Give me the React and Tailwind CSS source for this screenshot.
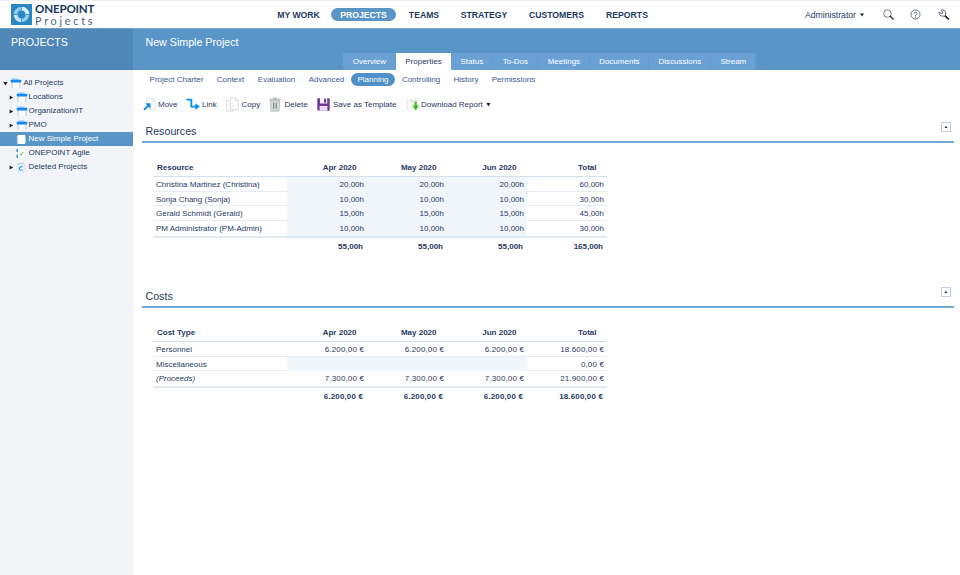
import React, { useState } from "react";

const navItems = [
  { title: "MY WORK", width: "w-[65px]" },
  { title: "PROJECTS", width: "w-[65px]" },
  { title: "TEAMS", width: "w-[56px]" },
  { title: "STRATEGY", width: "w-[64px]" },
  { title: "CUSTOMERS", width: "w-[81px]" },
  { title: "REPORTS", width: "w-[60px]" },
];

const tabs = [
  { title: "Overview", width: "w-[53px]" },
  { title: "Properties", width: "w-[55px]" },
  { title: "Status", width: "w-[42px]" },
  { title: "To-Dos", width: "w-[45px]" },
  { title: "Meetings", width: "w-[52px]" },
  { title: "Documents", width: "w-[59px]" },
  { title: "Discussions", width: "w-[62px]" },
  { title: "Stream", width: "w-[45px]" },
];

const subTabs = [
  { title: "Project Charter", width: "w-[67px]" },
  { title: "Context", width: "w-[41px]" },
  { title: "Evaluation", width: "w-[51px]" },
  { title: "Advanced", width: "w-[49px]" },
  { title: "Planning", width: "w-[44px]" },
  { title: "Controlling", width: "w-[52px]" },
  { title: "History", width: "w-[38px]" },
  { title: "Permissions", width: "w-[57px]" },
];

const resources = {
  title: "Resource",
  rows: [
    { name: "Christina Martinez (Christina)", values: ["20,00h", "20,00h", "20,00h"], total: "60,00h", shaded: true },
    { name: "Sonja Chang (Sonja)", values: ["10,00h", "10,00h", "10,00h"], total: "30,00h", shaded: true },
    { name: "Gerald Schmidt (Gerald)", values: ["15,00h", "15,00h", "15,00h"], total: "45,00h", shaded: true },
    { name: "PM Administrator (PM-Admin)", values: ["10,00h", "10,00h", "10,00h"], total: "30,00h", shaded: true },
  ],
  totals: ["55,00h", "55,00h", "55,00h", "165,00h"],
};

const costs = {
  title: "Cost Type",
  rows: [
    { name: "Personnel", values: ["6.200,00 €", "6.200,00 €", "6.200,00 €"], total: "18.600,00 €" },
    { name: "Miscellaneous", values: ["", "", ""], total: "0,00 €", shaded: true },
    { name: "(Proceeds)", values: ["7.300,00 €", "7.300,00 €", "7.300,00 €"], total: "21.900,00 €", italic: true },
  ],
  totals: ["6.200,00 €", "6.200,00 €", "6.200,00 €", "18.600,00 €"],
};

const Logo = () => (
  <div className="flex items-start">
    <svg className="w-[21px] h-[21px]" viewBox="0 0 21 21">
      <rect width="21" height="21" fill="#2b87c3" />
      <circle cx="10.5" cy="10.5" r="6" fill="none" stroke="#8fcdf0" strokeWidth="3.6" />
      <path d="M10.5 4.5a6 6 0 0 1 6 6" fill="none" stroke="#d9effa" strokeWidth="3.6" />
      <path d="M10.5 16.5a6 6 0 0 1-6-6" fill="none" stroke="#c3e4f6" strokeWidth="3.6" />
      <path d="M10.5 1.5v4.7M10.5 14.8v4.7M1.5 10.5h4.7M14.8 10.5h4.7" stroke="#2b87c3" strokeWidth="0.8" />
    </svg>
    <div className="ml-[3px] -mt-px flex flex-col font-[Lato,sans-serif] whitespace-nowrap">
      <span className="h-[11.5px] leading-[12px] text-[11.6px] font-bold tracking-[-0.18px] text-[#17375e]">
        ONEPOINT
      </span>
      <span className="h-[11.5px] leading-[11.5px] text-[10.8px] tracking-[2.75px] text-[#4a6585]">
        Projects
      </span>
    </div>
  </div>
);

const SearchIcon = () => (
  <svg className="w-[11px] h-[11px]" viewBox="0 0 12 12" fill="none">
    <circle cx="4.9" cy="4.9" r="4.1" stroke="#49546a" strokeWidth="0.8" />
    <path d="M7.9 7.9l3 3" stroke="#1d2a44" strokeWidth="1.4" strokeLinecap="round" />
  </svg>
);

const HelpIcon = () => (
  <svg className="w-[11px] h-[11px]" viewBox="0 0 11 11" fill="none">
    <circle cx="5.5" cy="5.5" r="4.6" stroke="#49546a" strokeWidth="0.8" />
    <path d="M4 4.5a1.5 1.4 0 1 1 2.3 1.2c-.6.4-.8.6-.8 1.2" stroke="#3b475e" strokeWidth="0.9" />
    <circle cx="5.5" cy="8.1" r="0.55" fill="#3b475e" />
  </svg>
);

const WrenchIcon = () => (
  <svg className="w-[12px] h-[12px]" viewBox="0 0 12 12" fill="none">
    <path
      d="M2.8 1.3A3.1 3.1 0 0 1 7.4 5L8 5.8 6.1 7.6 5.2 7A3.2 3.2 0 0 1 1.2 3l2 1.7 1.3-.3.2-1.3z"
      stroke="#3b475e"
      strokeWidth="0.8"
      strokeLinejoin="round"
    />
    <path d="M7.4 7.2l2.9 2.8" stroke="#101a2e" strokeWidth="1.7" strokeLinecap="round" />
  </svg>
);

const FolderIcon = () => (
  <svg className="w-[12px] h-[10px]" viewBox="0 0 12 10">
    <path d="M2 4.2h8V10H2z" fill="#fbfbfc" />
    <path d="M2.1 4.2V10M9.9 4.2V10" stroke="#8fb8e2" strokeWidth="0.7" />
    <path d="M1.6 .6h5.8l.7.6h2.3v1H1.6z" fill="#7cc2ff" />
    <path d="M.5 1.9h11l-.5 2.5H1z" fill="#1688ef" />
  </svg>
);

const ProjectIcon = () => (
  <svg className="w-[10px] h-[11px]" viewBox="0 0 10 11">
    <rect x="1.5" y="1" width="7.9" height="9" rx="1" fill="#fff" />
    <path d="M1.1 2v7" stroke="#c5def5" strokeWidth="0.8" strokeDasharray="1 1" />
  </svg>
);

const AgileIcon = () => (
  <svg className="w-[10px] h-[11px]" viewBox="0 0 10 11">
    <rect x="1.5" y="1" width="7.8" height="9" fill="#fff" stroke="#dde1e6" strokeWidth="0.5" />
    <path d="M1.2 1v3M1.2 6.8V10" stroke="#168af0" strokeWidth="1.3" />
    <path d="M3.6 5.8l1.3 1.5 2.5-3.4" stroke="#55c02c" strokeWidth="1" fill="none" />
  </svg>
);

const BinIcon = () => (
  <svg className="w-[10px] h-[11px]" viewBox="0 0 10 11">
    <path d="M1.8 2.2h6.6l-.6 8.1H2.5z" fill="#eef6fd" stroke="#b9d4ec" strokeWidth="0.6" />
    <path d="M1.3 2l6.9-1.2" stroke="#a5c8e8" strokeWidth="0.8" />
    <path d="M6.4 5.1a1.8 1.8 0 1 0 .2 2.5" stroke="#3c9df0" strokeWidth="1.1" fill="none" />
  </svg>
);

const MoveIcon = () => (
  <svg className="w-[13px] h-[14px]" viewBox="0 0 13 14">
    <path d="M3.5.8h5.8l2.7 2.9v9.2H3.5z" fill="#fafafa" stroke="#d5d7da" strokeWidth="0.6" />
    <path d="M9.3.8v2.9H12" fill="none" stroke="#d5d7da" strokeWidth="0.6" />
    <path d="M1 12.8l4.3-4.2" stroke="#0a8ae6" strokeWidth="1.8" />
    <path d="M2.2 6.2h5.3v5.5z" fill="#0a8ae6" />
  </svg>
);

const LinkIcon = () => (
  <svg className="w-[14px] h-[12px]" viewBox="0 0 14 12">
    <path d="M.3 1.6h5v7h5" fill="none" stroke="#0c8ff0" strokeWidth="1.9" />
    <path d="M9.4 5.2l4.4 3.4-4.4 3.4z" fill="#0c8ff0" />
  </svg>
);

const CopyIcon = () => (
  <svg className="w-[13px] h-[15px]" viewBox="0 0 13 15" fill="#fafafa" stroke="#d0d0d3" strokeWidth="0.6">
    <path d="M4.3.6h5.4l2.8 2.9v9.2H4.3z" />
    <path d="M9.7.6v2.9h2.8" />
    <path d="M.5 3.2h3.8v9.5h2.9v1.6H.5z" />
  </svg>
);

const DeleteIcon = () => (
  <svg className="w-[12px] h-[15px]" viewBox="0 0 12 15">
    <path d="M1.3 3.4h9.4l-.6 10.8H1.9z" fill="#d2d7d9" stroke="#a4acb0" strokeWidth="0.6" />
    <path d="M.5 1.7h11v1.8H.5zM4 .6h4v1.1H4z" fill="#b9c0c3" />
    <path d="M4.6 5.7v6M7.2 5.7v6" stroke="#7e878c" strokeWidth="1.1" />
  </svg>
);

const SaveIcon = () => (
  <svg className="w-[13px] h-[13px]" viewBox="0 0 13 13">
    <path d="M.3.3h12.4v12.4H1.5L.3 11.5z" fill="#6f3a95" />
    <rect x="3" y="0" width="7.2" height="5.5" fill="#f3eef7" />
    <rect x="7.2" y="0.7" width="1.8" height="4" fill="#5b2d80" />
    <rect x="2.6" y="8" width="7.8" height="4.7" fill="#f0e9f5" />
    <path d="M3 9.5h7M3 11h7" stroke="#cdbbdc" strokeWidth="0.5" />
  </svg>
);

const DownloadIcon = () => (
  <svg className="w-[12px] h-[14px]" viewBox="0 0 12 14">
    <rect x="0.4" y="0.6" width="10.6" height="12.6" fill="#fbfbfb" />
    <path d="M.5.6v12.6" stroke="#dcdcdc" strokeWidth="0.6" />
    <path d="M4 2.3v3M6.3 3v3M9 1.3v3.5" stroke="#c9d3cf" strokeWidth="1.1" />
    <path d="M8.7 4.7v5" stroke="#44bb1c" strokeWidth="2.2" />
    <path d="M5.4 8.6H12L8.7 13.6z" fill="#44bb1c" />
  </svg>
);

const Caret = ({ open }) => (
  <svg className="w-[5px] h-[5px]" viewBox="0 0 5 5">
    <path d={open ? "M.3 1h4.2L2.4 4.4z" : "M.7.5v4L4.2 2.5z"} fill="#1b2433" />
  </svg>
);

const treeItems = [
  { title: "Locations", icon: FolderIcon, arrow: true },
  { title: "Organization/IT", icon: FolderIcon, arrow: true },
  { title: "PMO", icon: FolderIcon, arrow: true },
  { title: "New Simple Project", icon: ProjectIcon },
  { title: "ONEPOINT Agile", icon: AgileIcon },
  { title: "Deleted Projects", icon: BinIcon, arrow: true },
];

const toolItems = [
  { title: "Move", icon: MoveIcon, width: "w-[43px]", iconWidth: "w-[15px]" },
  { title: "Link", icon: LinkIcon, width: "w-[40px]", iconWidth: "w-[16px]" },
  { title: "Copy", icon: CopyIcon, width: "w-[43px]", iconWidth: "w-[15.5px]" },
  { title: "Delete", icon: DeleteIcon, width: "w-[48px]", iconWidth: "w-[15.5px]" },
  { title: "Save as Template", icon: SaveIcon, width: "w-[90px]", iconWidth: "w-[16px]" },
  { title: "Download Report", icon: DownloadIcon, width: "w-[90px]", iconWidth: "w-[14px]", menu: true },
];

const Sidebar = ({ selected, onSelect }) => (
  <div className="w-[133px] shrink-0 flex flex-col bg-[#f2f4f7]">
    <div className="h-[42px] bg-[#4f88b7] pl-[11px] pt-[7px] text-[10.67px] leading-[12px] text-white border-t border-[#6d9fc9]">
      PROJECTS
    </div>
    <div className="pt-[6px] text-[#1f3a5f]">
      <div className="h-[14px] flex items-center pl-[3px]">
        <Caret open />
        <div className="ml-[2px] w-[13.5px]">
          <FolderIcon />
        </div>
        All Projects
      </div>
      {treeItems.map((item) => (
        <div
          key={item.title}
          onClick={() => onSelect(item.title)}
          className={`h-[14px] flex items-center pl-[9px] cursor-pointer ${
            selected === item.title ? "bg-[#5a95c8] text-white" : ""
          }`}
        >
          <div className="w-[7px]">{item.arrow && <Caret />}</div>
          <div className="w-[12.5px] flex">
            <item.icon />
          </div>
          {item.title}
        </div>
      ))}
    </div>
  </div>
);

const DataTable = ({ table, valueClass = "" }) => (
  <div className="ml-[11px] w-[454px] text-[#1f3a5f]">
    <div className="h-[17px] flex items-center border-b border-[#d3e0ef] font-bold">
      <div className="w-[134px] pl-[4px]">{table.title}</div>
      {["Apr 2020", "May 2020", "Jun 2020", "Total"].map((month) => (
        <div key={month} className="w-[80px] pr-[10.5px] text-right">
          {month}
        </div>
      ))}
    </div>
    {table.rows.map((row, index) => {
      const line =
        index < table.rows.length - 1 ? "border-[#e6ecf3]" : "border-white";
      return (
        <div key={row.name} className="h-[14.67px] flex leading-[15.6px]">
          <div
            className={`w-[134px] h-full pl-[3px] border-b ${line} ${
              row.italic ? "italic" : ""
            }`}
          >
            {row.name}
          </div>
          {row.values.map((value, i) => (
            <div
              key={i}
              className={`w-[80px] h-full pr-[3px] text-right border-b ${valueClass} ${
                row.shaded ? "bg-[#f1f6fa] border-[#f1f6fa]" : line
              }`}
            >
              {value}
            </div>
          ))}
          <div className={`w-[80px] h-full pr-[3px] text-right border-b ${valueClass} ${line}`}>
            {row.total}
          </div>
        </div>
      );
    })}
    <div className="h-[2px] bg-[#e1eaf4]" />
    <div className={`h-[18px] flex items-center pl-[134px] font-bold ${valueClass}`}>
      {table.totals.map((total, i) => (
        <div key={i} className="w-[80px] pr-[4px] text-right">
          {total}
        </div>
      ))}
    </div>
  </div>
);

const Section = ({ title, children }) => (
  <div className="ml-[9px] w-[812px] h-[165px]">
    <div className="h-[23px] flex justify-between pl-[3.5px] pr-[3px] border-b-2 border-[#74abdb]">
      <h2 className="text-[10.67px] leading-[12px] pt-[5px] text-[#1f3a5f]">{title}</h2>
      <button className="mt-[2px] w-[10px] h-[10px] border border-[#c3cfe0] flex items-center justify-center">
        <svg className="w-[4px] h-[4px]" viewBox="0 0 4 4">
          <path d="M2 .8L3.5 3H.5z" fill="#1f3a5f" />
        </svg>
      </button>
    </div>
    <div className="pt-[17px]">{children}</div>
  </div>
);

const App = () => {
  const [activeTab, setActiveTab] = useState("Properties");
  const [activeSubTab, setActiveSubTab] = useState("Planning");
  const [selected, setSelected] = useState("New Simple Project");

  return (
    <div className="w-[960px] h-[575px] flex flex-col overflow-hidden bg-white font-['Liberation_Sans',Arial,sans-serif] text-[8px] leading-[10px] whitespace-nowrap">
      {/* Top bar */}
      <div className="h-[28px] shrink-0 flex border-t border-[#f0f0f2] text-[8.67px] text-[#1c3a63]">
        <div className="w-[266px] pl-[11px] pt-[3px]">
          <Logo />
        </div>
        <div className="w-[539px] flex items-center font-bold">
          {navItems.map((item) => (
            <div
              key={item.title}
              className={`${item.width} h-[13px] flex items-center justify-center rounded-full ${
                item.title === "PROJECTS" ? "bg-[#5a95c8] text-white" : ""
              }`}
            >
              {item.title}
            </div>
          ))}
        </div>
        <div className="flex items-center">
          <div className="w-[78px] flex items-center gap-[4px]">
            Administrator
            <svg className="w-[4px] h-[4px]" viewBox="0 0 4 4">
              <path d="M0 .6h4L2 3.4z" fill="#1b2433" />
            </svg>
          </div>
          <div className="w-[27px]">
            <SearchIcon />
          </div>
          <div className="w-[28px]">
            <HelpIcon />
          </div>
          <WrenchIcon />
        </div>
      </div>

      <div className="flex flex-1">
        <Sidebar selected={selected} onSelect={setSelected} />

        <div className="flex-1 flex flex-col">
          <div className="h-[42px] flex flex-col bg-[#5a95c8] text-white border-t border-[#78a8d3]">
            <h1 className="h-[24px] pl-[12.5px] pt-[7px] text-[10.67px] leading-[12px]">
              New Simple Project
            </h1>
            <div className="ml-[210px] h-[17px] flex">
              {tabs.map((tab) => (
                <div
                  key={tab.title}
                  onClick={() => setActiveTab(tab.title)}
                  className={`${tab.width} flex items-center justify-center cursor-pointer ${
                    activeTab === tab.title
                      ? "bg-white text-[#1f3a5f]"
                      : "bg-[#69a1d5] border-r border-[#639bcf] pl-[0.75px]"
                  }`}
                >
                  {tab.title}
                </div>
              ))}
            </div>
          </div>

          <div className="mt-[3px] ml-[10px] h-[13px] flex items-center text-[#3a5a92]">
            {subTabs.map((tab) => (
              <div
                key={tab.title}
                onClick={() => setActiveSubTab(tab.title)}
                className={`${tab.width} h-[13px] flex items-center justify-center rounded-full cursor-pointer ${
                  activeSubTab === tab.title ? "bg-[#5090c8] text-white" : ""
                }`}
              >
                {tab.title}
              </div>
            ))}
          </div>

          <div className="mt-[10px] ml-[10px] h-[16px] flex items-center text-[#1f3a5f]">
            {toolItems.map((item) => (
              <div key={item.title} className={`${item.width} h-[16px] flex items-center`}>
                <div className={`${item.iconWidth} shrink-0`}>
                  <item.icon />
                </div>
                <span className="pt-px">{item.title}</span>
                {item.menu && (
                  <div className="ml-[3px]">
                    <Caret open />
                  </div>
                )}
              </div>
            ))}
          </div>

          <div className="pt-[8px]">
            <Section title="Resources">
              <DataTable table={resources} />
            </Section>
            <Section title="Costs">
              <DataTable table={costs} valueClass="tracking-[0.14px]" />
            </Section>
          </div>
        </div>
      </div>
    </div>
  );
};

export default App;
